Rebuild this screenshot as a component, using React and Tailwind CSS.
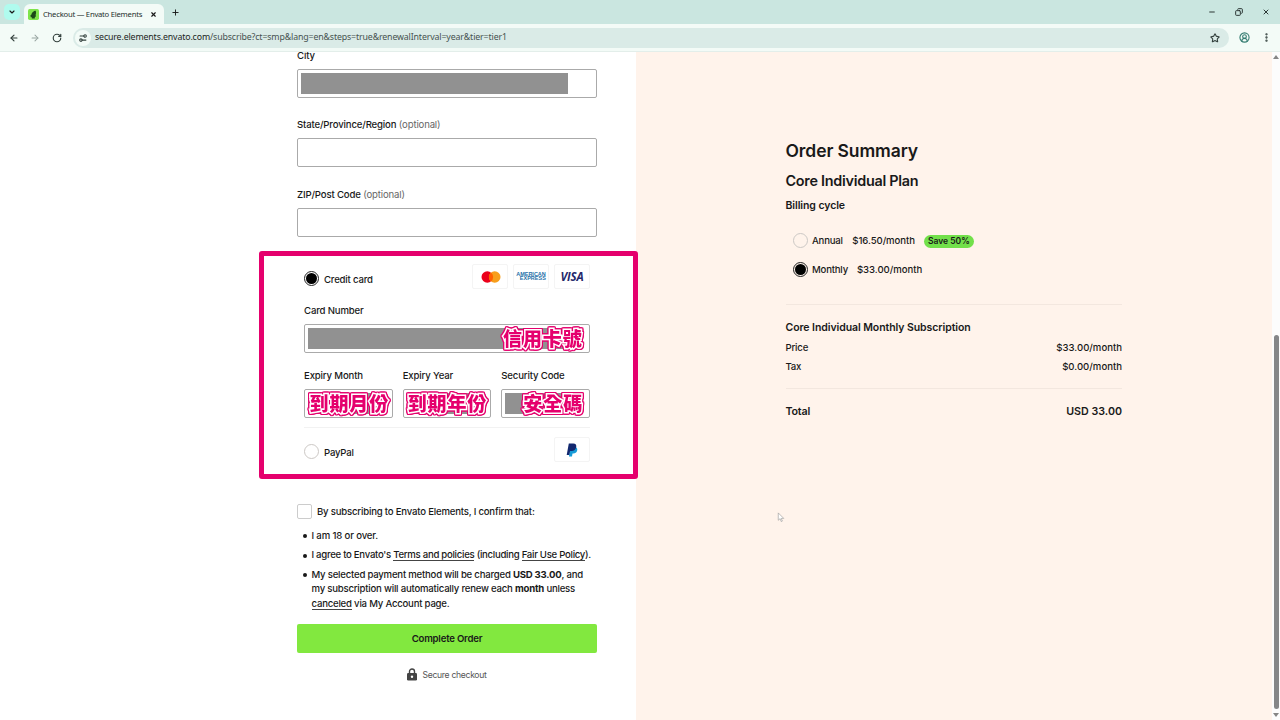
import {
  ArrowLeft,
  ArrowRight,
  ChevronDown,
  CircleUserRound,
  Copy,
  EllipsisVertical,
  Minus,
  Plus,
  RotateCw,
  Settings2,
  Star,
  X,
} from "lucide-react";
import clsx from "clsx";

function TabStrip() {
  return (
    <div className="flex h-6 bg-[#cae6e0]">
      <div className="ml-1 mt-1 flex size-4 items-center justify-center rounded-[5px] bg-[#b0fbee]">
        <ChevronDown className="size-2" strokeWidth={3.5} />
      </div>
      <div className="ml-1 mt-1 flex h-5 w-[140px] items-center rounded-t-[6px] bg-[#f3fbf7] pl-1 pr-[7px]">
        <svg viewBox="0 0 10 10" className="size-[11px] shrink-0">
          <rect width="10" height="10" rx="1.5" fill="#7fe44a" />
          <path
            d="M7 1.500C5.300 1.500 3.200 3.200 3.200 5l-1 .6.300 1.900 1-.1V8.700h2.700V7.400C7.400 7 7.300 6 6.900 5.400c.5-1 .6-2.500.1-3.900z"
            fill="#1b4a17"
          />
        </svg>
        <span className="ml-1 w-0 flex-1 whitespace-nowrap font-['Noto_Sans'] text-[7.700px] font-normal leading-4 tracking-[-0.250px] text-[#25302d]">
          Checkout — Envato Elements
        </span>
        <X className="size-[7px] shrink-0" strokeWidth={4} />
      </div>
      <Plus className="ml-[7px] mt-2 size-[9px]" strokeWidth={2.5} />
      <div className="ml-auto flex items-center gap-[19px] pr-[10px] text-[#2c3735]">
        <Minus className="size-2" strokeWidth={3} />
        <Copy className="size-2 -scale-x-100" strokeWidth={3} />
        <X className="size-2" strokeWidth={3} />
      </div>
    </div>
  );
}

function Toolbar() {
  return (
    <div className="flex h-7 items-center border-b border-[#e3eeea] bg-[#f3fbf7] text-[#33403d]">
      <ArrowLeft className="ml-[9px] size-[10px]" strokeWidth={2.8} />
      <ArrowRight className="ml-[11px] size-[10px] text-[#98a5a1]" strokeWidth={2.5} />
      <RotateCw className="ml-[12px] size-[10px]" strokeWidth={2.8} />
      <div className="ml-[11px] flex h-5 w-[1156px] items-center rounded-full bg-[#daebe7] pl-[2px] pr-[9px]">
        <div className="flex size-4 items-center justify-center rounded-full bg-[#f3fbf7]">
          <Settings2 className="size-[10px] -scale-y-100" strokeWidth={2.6} />
        </div>
        <span className="ml-[4px] mt-px flex-1 font-['Noto_Sans'] text-[8.800px] font-normal tracking-[-0.140px] text-[#46524f]">
          <span className="text-[#1c2523]">secure.elements.envato.com</span>
          /subscribe?ct=smp&amp;lang=en&amp;steps=true&amp;renewalInterval=year&amp;tier=tier1
        </span>
        <Star className="size-[10px]" strokeWidth={2.6} />
      </div>
      <CircleUserRound className="ml-[10px] size-[11px] text-[#357d72]" strokeWidth={2.4} />
      <EllipsisVertical className="ml-[11px] size-[11px]" strokeWidth={3} />
    </div>
  );
}

function Radio({ checked }) {
  return (
    <span
      className={clsx(
        "flex size-[15px] shrink-0 items-center justify-center rounded-full border",
        checked ? "border-[#222]" : "border-[#ccc8c5]"
      )}
    >
      {checked && <span className="size-[11px] rounded-full bg-black" />}
    </span>
  );
}

function Field({ label, optional, className, children }) {
  return (
    <div className={className}>
      <div className="h-[22px] whitespace-nowrap leading-[18px] tracking-[-0.160px]">
        {label}
        {optional && <span className="font-normal text-[#666]"> (optional)</span>}
      </div>
      <div className="flex h-[29px] items-center rounded-[2px] border border-[#aaa] bg-white px-[3px]">
        {children}
      </div>
    </div>
  );
}

// Outlined caption that sits over a redacted value
function Caption({ className, children }) {
  return (
    <span
      className={clsx(
        "absolute top-[-4px] whitespace-nowrap font-['Noto_Sans_CJK_TC',sans-serif] text-[19px] font-black leading-7 tracking-[0.9px] text-[#e5006d]",
        "[paint-order:stroke_fill] [-webkit-text-stroke:3px_white]",
        "[filter:drop-shadow(1px_0_0_#e5006d)_drop-shadow(-1px_0_0_#e5006d)_drop-shadow(0_1px_0_#e5006d)_drop-shadow(0_-1px_0_#e5006d)]",
        className
      )}
    >
      {children}
    </span>
  );
}

function Redacted({ className, caption, captionClass }) {
  return (
    <span className={clsx("relative block h-[21px] bg-[#919191]", className)}>
      {caption && <Caption className={captionClass}>{caption}</Caption>}
    </span>
  );
}

function Brand({ children }) {
  return (
    <span className="flex h-[25px] w-9 items-center justify-center rounded-[2px] border border-[#f4f4f4] bg-white">
      {children}
    </span>
  );
}

function PaymentMethods() {
  return (
    <div className="mt-[15px] h-[226px] px-[7px] pt-[12px]">
      <div className="flex h-[25px] items-center">
        <div className="mt-[5px] flex items-center gap-[5px]">
          <Radio checked />
          <span className="mt-[2px]">Credit card</span>
        </div>
        <div className="ml-auto flex gap-[5px]">
          <Brand>
            <svg viewBox="0 0 20 12" className="ml-px h-3 w-5">
              <circle cx="6.3" cy="6" r="5.8" fill="#eb001b" />
              <circle cx="13.7" cy="6" r="5.8" fill="#f79e1b" />
              <path d="M10 1.5a5.8 5.8 0 0 1 0 9 5.8 5.8 0 0 1 0-9z" fill="#ff5f00" />
            </svg>
          </Brand>
          <Brand>
            <span className="-mt-px block text-right font-['Liberation_Sans'] text-[5.500px] font-bold leading-[4.500px] tracking-normal text-[#1f6fa8]">
              AMERICAN
              <br />
              EXPRESS
            </span>
          </Brand>
          <Brand>
            <span className="font-['Open_Sans'] text-[11.500px] font-bold italic leading-3 tracking-[-0.200px] text-[#25286b]">
              VISA
            </span>
          </Brand>
        </div>
      </div>

      <Field label="Card Number" className="mt-[13px]">
        <Redacted className="w-[272px]" caption="信用卡號" captionClass="left-[195px]" />
      </Field>

      <div className="mt-[14px] grid grid-cols-3 gap-[10px]">
        <Field label="Expiry Month">
          <Redacted className="w-[78px]" caption="到期月份" captionClass="left-[1.500px]" />
        </Field>
        <Field label="Expiry Year">
          <Redacted className="w-[78px]" caption="到期年份" captionClass="left-px" />
        </Field>
        <Field label="Security Code">
          <Redacted className="w-[70px]" caption="安全碼" captionClass="left-[18px]" />
        </Field>
      </div>

      <div className="mt-[9px] flex items-center border-t border-[#f2f2f2] pt-[9px]">
        <div className="mt-[4px] flex items-center gap-[5px]">
          <Radio />
          <span className="mt-[3px]">PayPal</span>
        </div>
        <div className="ml-auto">
          <Brand>
            <svg viewBox="0 0 12 14" className="h-[14px] w-3">
              <path d="M4 4h5.500c2 .6 2 2.500 1.600 3.800C10.600 9.600 9.200 10.500 7.300 10.500H6.500L6 13.500H3z" fill="#169bd7" />
              <path d="M2.800.5h4.400c2.600 0 3.500 1.600 3 3.800C9.700 6.800 8 7.900 5.600 7.900H4.100L3.300 12H.7z" fill="#12286f" />
            </svg>
          </Brand>
        </div>
      </div>

      {/* highlight frame, a little wider than the form column */}
      <div className="pointer-events-none absolute left-[259px] top-[199px] h-[228px] w-[379px] rounded-[3px] border-[5px] border-[#e5006d]" />
    </div>
  );
}

function Link({ children }) {
  return <span className="border-b border-[#444]">{children}</span>;
}

function Item({ className, children }) {
  return (
    <li className={clsx("relative mb-[5px] whitespace-nowrap", className)}>
      <span className="absolute -left-[9px] top-[5.500px] size-[4px] rounded-full bg-[#191919]" />
      {children}
    </li>
  );
}

function Terms() {
  return (
    <div className="mt-[25.500px]">
      <div className="flex items-center gap-[5px]">
        <span className="size-[15px] rounded-[2px] border border-[#ccc]" />
        <span className="mt-px">By subscribing to Envato Elements, I confirm that:</span>
      </div>
      <ul className="mt-[10px] pl-[14.500px] leading-[14.400px]">
        <Item className="tracking-[-0.150px]">I am 18 or over.</Item>
        <Item className="tracking-[-0.280px]">
          I agree to Envato's <Link>Terms and policies</Link> (including{" "}
          <Link>Fair Use Policy</Link>).
        </Item>
        <Item className="tracking-[-0.220px]">
          My selected payment method will be charged <b>USD 33.00</b>, and
          <br />
          my subscription will automatically renew each <b>month</b> unless
          <br />
          <Link>canceled</Link> via My Account page.
        </Item>
      </ul>
    </div>
  );
}

function CheckoutForm() {
  return (
    <div className="w-[636px] bg-white pl-[297px] tracking-[-0.200px]">
      <div className="w-[300px]">
        <Field label="City" className="-mt-[5px]">
          <Redacted className="w-[267px]" />
        </Field>
        <Field label="State/Province/Region" optional className="mt-[18px]" />
        <Field label="ZIP/Post Code" optional className="mt-[19px]" />
        <PaymentMethods />
        <Terms />
        <button className="mt-[13px] block h-[29px] w-full rounded-[2px] bg-[#82e83f] pt-px font-semibold tracking-[-0.200px]">
          Complete Order
        </button>
        <div className="mt-[15px] flex items-center justify-center gap-[5px] text-[8.600px] font-normal tracking-[-0.300px] text-[#555]">
          <svg viewBox="0 0 10 13" className="h-[13px] w-[10px]">
            <path d="M2.5 6V3.5a2.5 2.5 0 0 1 5 0V6" fill="none" stroke="#444" strokeWidth="1.4" />
            <rect y="5" width="10" height="7.5" rx="1.2" fill="#444" />
            <circle cx="5" cy="8.7" r="1.2" fill="#fff" />
          </svg>
          <span className="mt-px">Secure checkout</span>
        </div>
      </div>
    </div>
  );
}

function Row({ label, value, className }) {
  return (
    <div className={clsx("flex justify-between", className)}>
      <span className="tracking-[-0.200px]">{label}</span>
      <span>{value}</span>
    </div>
  );
}

function OrderSummary() {
  return (
    <div className="w-[636px] bg-[#fff3eb] pl-[149.500px]">
      <div className="w-[336.500px]">
        <h1 className="mt-[87px] text-[17.500px] font-semibold leading-6 tracking-[-0.100px]">
          Order Summary
        </h1>
        <h2 className="mt-2 text-[14.400px] font-semibold leading-5 tracking-[-0.270px]">
          Core Individual Plan
        </h2>
        <h3 className="mt-[7px] text-[10.500px] font-semibold leading-4 tracking-[-0.080px]">
          Billing cycle
        </h3>
        <div className="mt-[19px] pl-[7.500px]">
          <div className="flex h-[15px] items-center">
            <Radio />
            <span className="ml-1 mt-[2px] tracking-[-0.200px]">Annual</span>
            <span className="ml-[9.500px] mt-[2px] tracking-[-0.080px]">$16.50/month</span>
            <span className="ml-[9px] mt-px flex h-[13px] w-[50px] items-center justify-center rounded-full bg-[#72e04a] text-[8.500px] font-semibold">
              Save 50%
            </span>
          </div>
          <div className="mt-[14px] flex h-[15px] items-center">
            <Radio checked />
            <span className="ml-1 mt-[2px] tracking-[-0.200px]">Monthly</span>
            <span className="ml-[9px] mt-[2px] tracking-[-0.050px]">$33.00/month</span>
          </div>
        </div>
        <div className="mt-[27px] border-t border-[#f3e7df] pt-[15px]">
          <div className="text-[10.500px] font-semibold leading-4 tracking-[-0.070px]">
            Core Individual Monthly Subscription
          </div>
          <Row label="Price" value="$33.00/month" className="mt-1 leading-4" />
          <Row label="Tax" value="$0.00/month" className="mt-[3px] leading-4" />
        </div>
        <Row
          label="Total"
          value="USD 33.00"
          className="mt-[13px] border-t border-[#f3e7df] pt-[15px] text-[10.700px] font-semibold leading-4"
        />
      </div>
    </div>
  );
}

function Scrollbar() {
  return (
    <div className="flex w-2 flex-col items-center bg-[#fcfcfc] pt-[3px]">
      <span className="border-x-[3px] border-b-[4px] border-x-transparent border-b-[#858585]" />
      <span className="mt-[276px] h-[374px] w-[5px] rounded-full bg-[#858688]" />
      <span className="mt-[4px] border-x-[3px] border-t-[4px] border-x-transparent border-t-[#858585]" />
    </div>
  );
}

export default function App() {
  return (
    <div className="h-[720px] w-[1280px] overflow-hidden font-['Inter',sans-serif] text-[9.600px] font-medium text-[#191919]">
      <TabStrip />
      <Toolbar />
      <div className="relative flex h-[668px] overflow-hidden">
        <CheckoutForm />
        <OrderSummary />
        <Scrollbar />
        <svg viewBox="0 0 8 12" className="absolute left-[777px] top-[460px] h-[11px] w-2">
          <path d="M1 1v8l2-1.700L4.300 10.500l1.200-.6L4.200 7H7z" fill="#fff" stroke="#999" strokeWidth=".7" />
        </svg>
      </div>
    </div>
  );
}
